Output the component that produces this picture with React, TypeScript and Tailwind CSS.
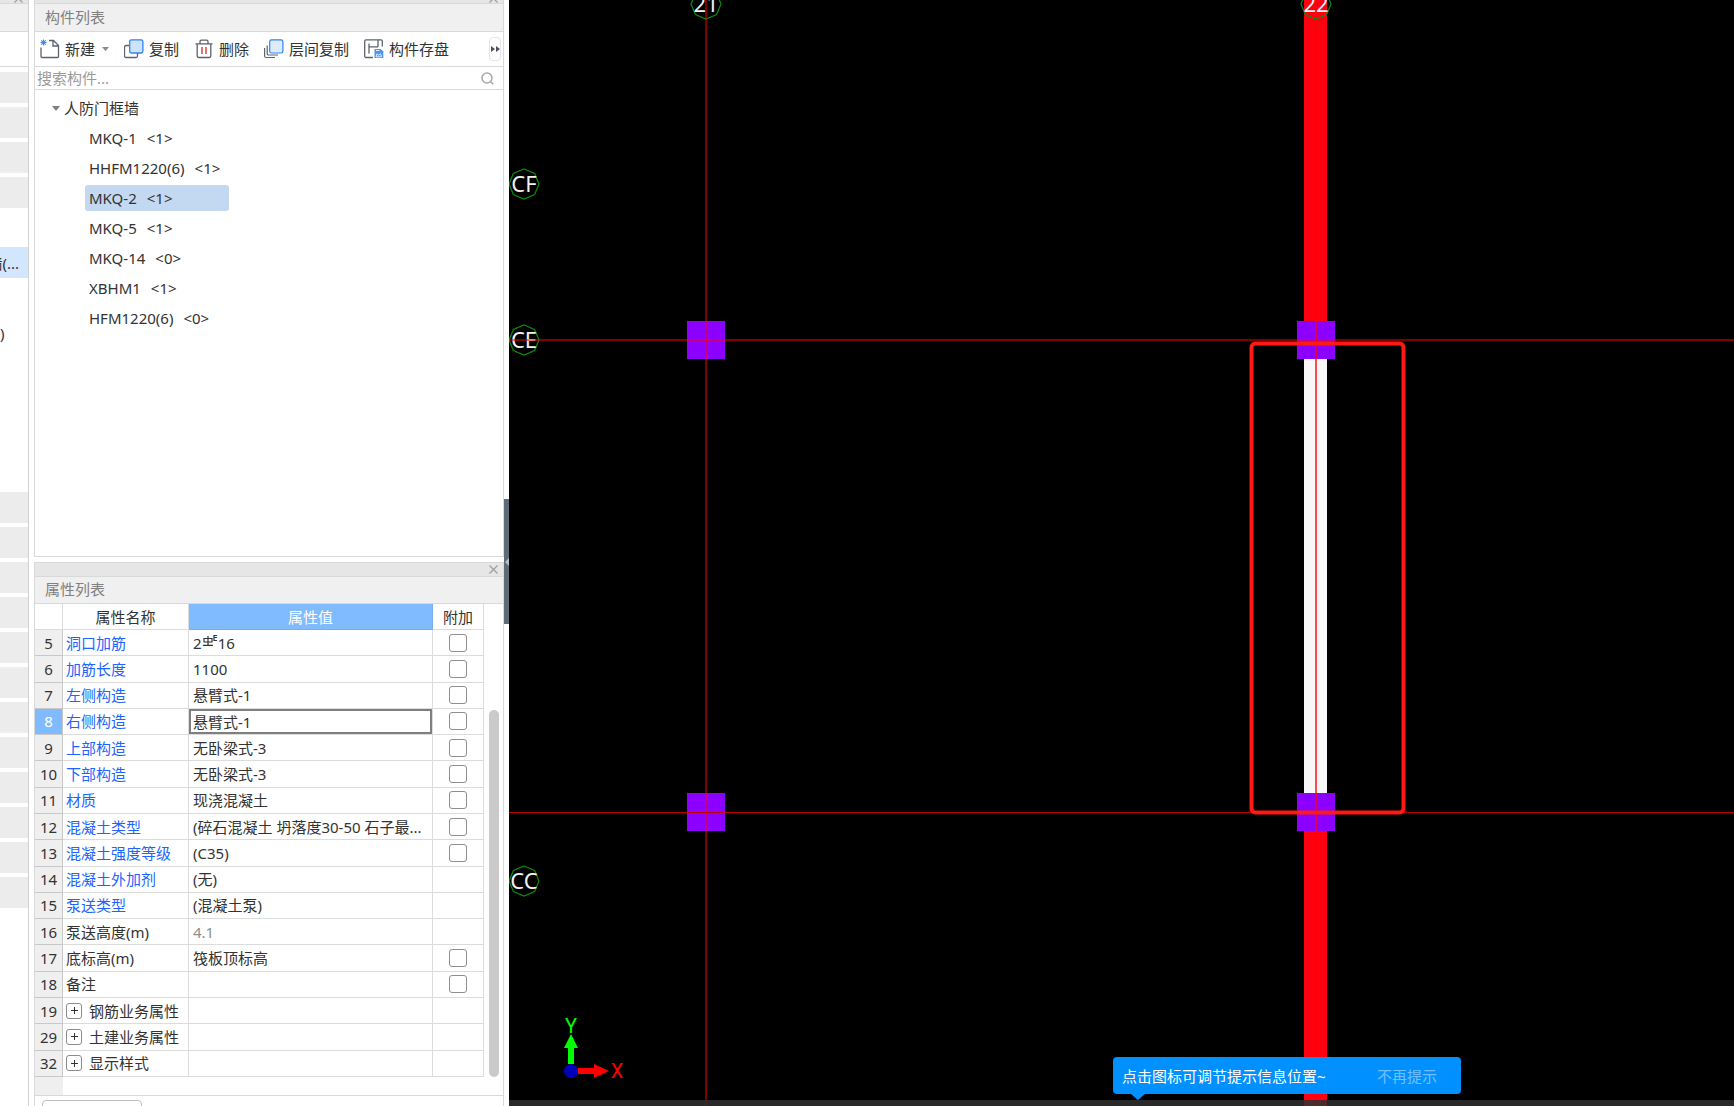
import { useState } from "react";

interface Component {
  name: string;
  count: number;
}

interface Property {
  id: number;
  name: string;
  value?: string;
  common?: boolean;
  extra?: boolean;
  group?: boolean;
  muted?: boolean;
}

const components: Component[] = [
  { name: "MKQ-1", count: 1 },
  { name: "HHFM1220(6)", count: 1 },
  { name: "MKQ-2", count: 1 },
  { name: "MKQ-5", count: 1 },
  { name: "MKQ-14", count: 0 },
  { name: "XBHM1", count: 1 },
  { name: "HFM1220(6)", count: 0 },
];

const properties: Property[] = [
  { id: 5, name: "洞口加筋", value: "rebar", common: true, extra: true },
  { id: 6, name: "加筋长度", value: "1100", common: true, extra: true },
  { id: 7, name: "左侧构造", value: "悬臂式-1", common: true, extra: true },
  { id: 8, name: "右侧构造", value: "悬臂式-1", common: true, extra: true },
  { id: 9, name: "上部构造", value: "无卧梁式-3", common: true, extra: true },
  { id: 10, name: "下部构造", value: "无卧梁式-3", common: true, extra: true },
  { id: 11, name: "材质", value: "现浇混凝土", common: true, extra: true },
  { id: 12, name: "混凝土类型", value: "(碎石混凝土 坍落度30-50 石子最...", common: true, extra: true },
  { id: 13, name: "混凝土强度等级", value: "(C35)", common: true, extra: true },
  { id: 14, name: "混凝土外加剂", value: "(无)", common: true },
  { id: 15, name: "泵送类型", value: "(混凝土泵)", common: true },
  { id: 16, name: "泵送高度(m)", value: "4.1", muted: true },
  { id: 17, name: "底标高(m)", value: "筏板顶标高", extra: true },
  { id: 18, name: "备注", extra: true },
  { id: 19, name: "钢筋业务属性", group: true },
  { id: 29, name: "土建业务属性", group: true },
  { id: 32, name: "显示样式", group: true },
];

// module list: g = collapsed group, s = selected, anything else is a plain row
const modules = "gggg.s.t....gggggggggggg".split("");

function CloseIcon() {
  return (
    <svg className="h-[9px] w-[9px] shrink-0" viewBox="0 0 9 9" fill="none" stroke="#a0a0a0" strokeWidth="1.3">
      <path d="M.5.5l8 8M8.5.5l-8 8" />
    </svg>
  );
}

function NewIcon() {
  return (
    <svg className="h-5 w-5" viewBox="0 0 20 20" fill="none">
      <path d="M1 8.500V17.500a1 1 0 0 0 1 1H17.500a1 1 0 0 0 1-1V6.500L13.500 1.500H9M13 1.500V7h5.500" stroke="#5b6270" strokeWidth="1.3" />
      <path d="M3.500.500v6M.500 3.500h6M1.300 1.300l4.400 4.400M5.700 1.300L1.300 5.700" stroke="#3c8cf0" strokeWidth="1.1" />
    </svg>
  );
}

function CopyIcon() {
  return (
    <svg className="h-5 w-5" viewBox="0 0 20 20" fill="none" strokeWidth="1.3">
      <path d="M5.500 6.500H2a1.500 1.500 0 0 0-1.500 1.500v9A1.500 1.500 0 0 0 2 18.500h10a1.500 1.500 0 0 0 1.500-1.500V14" stroke="#5b6270" />
      <rect x="5.700" y=".800" width="13.200" height="13.200" rx="1.800" fill="#cfe2fa" stroke="#2f86ee" />
    </svg>
  );
}

function DeleteIcon() {
  return (
    <svg className="h-5 w-5" viewBox="0 0 20 20" fill="none" strokeWidth="1.300">
      <path d="M1.500 4.800h17M6 4.800V2.500a1.300 1.300 0 0 1 1.300-1.300h5.400a1.300 1.300 0 0 1 1.300 1.300v2.300M3.200 4.800v12.200a1.500 1.500 0 0 0 1.500 1.500h10.600a1.500 1.500 0 0 0 1.500-1.500V4.800" stroke="#5b6270" />
      <path d="M8 8v7M12 8v7" stroke="#e0453c" strokeWidth="1.500" />
    </svg>
  );
}

function FloorCopyIcon() {
  return (
    <svg className="h-5 w-5" viewBox="0 0 20 20" fill="none" strokeWidth="1.200">
      <path d="M.600 9v8a1.500 1.500 0 0 0 1.500 1.500H11M3.200 6.500v8a1.500 1.500 0 0 0 1.500 1.500H14" stroke="#5b6270" />
      <rect x="5.700" y=".800" width="13.200" height="13.200" rx="1.800" fill="#deebfc" stroke="#2f86ee" />
    </svg>
  );
}

function SaveIcon() {
  return (
    <svg className="h-5 w-5" viewBox="0 0 20 20" fill="none" strokeWidth="1.300">
      <path d="M9 18.500H2a1.300 1.300 0 0 1-1.300-1.300V2A1.300 1.300 0 0 1 2 .800h15A1.300 1.300 0 0 1 18.300 2v5.500M5 4.500v10M5 7.800h9M14 1v6.800" stroke="#5b6270" />
      <path d="M10.500 10h6.300l2.500 2.500v6.500h-8.800z" fill="#4a94f2" />
      <path d="M12 17.800l1-3 1.800 1.500 1.800-1.500 1 3zM12 11.500h3.500" stroke="#e4effd" strokeWidth="1" />
    </svg>
  );
}

function DockBar({ children }: { children?: React.ReactNode }) {
  return (
    <div className="flex h-[3px] shrink-0 items-end justify-end overflow-hidden bg-[#e6e6e6] px-[5px]">
      {children}
    </div>
  );
}

function ModuleStrip() {
  return (
    <aside className="flex w-[29px] shrink-0 flex-col overflow-hidden border-r border-[#d2d2d2]">
      <DockBar>
        <CloseIcon />
      </DockBar>
      <div className="h-7 shrink-0 border-t border-[#d9d9d9] bg-[#f0f0f0]" />
      <div className="h-9 shrink-0 border-y border-[#d9d9d9]" />
      <ul className="mt-[5px] flex flex-col gap-1">
        {modules.map((kind, i) => (
          <li
            key={i}
            className={
              kind === "g"
                ? "h-[31px] bg-[#ececec]"
                : kind === "s"
                  ? "flex h-[31px] items-center justify-end bg-[#d2e6ff] pr-[9px] whitespace-nowrap"
                  : "flex h-[31px] items-center"
            }
          >
            {kind === "s" && "墙(..."}
            {kind === "t" && ")"}
          </li>
        ))}
      </ul>
    </aside>
  );
}

function ComponentPanel() {
  const [selected, setSelected] = useState("MKQ-2");

  return (
    <section className="flex min-h-0 flex-1 flex-col overflow-hidden border-x border-b border-[#d9d9d9]">
      <DockBar>
        <CloseIcon />
      </DockBar>
      <h2 className="h-7 shrink-0 border-t border-[#d9d9d9] bg-[#f0f0f0] px-2.5 leading-[26px] text-[#808080]">构件列表</h2>
      <div className="flex h-9 shrink-0 items-center gap-[15px] border-y border-[#d9d9d9] pr-[2px] pl-[5px] whitespace-nowrap">
        <button className="flex items-center gap-[5px]">
          <NewIcon />
          新建
          <svg className="ml-[2px] h-1 w-[7px]" viewBox="0 0 7 4" fill="#8a8a8a">
            <path d="M0 0h7L3.500 4z" />
          </svg>
        </button>
        <button className="flex items-center gap-[5px]">
          <CopyIcon />
          复制
        </button>
        <button className="flex items-center gap-[5px]">
          <DeleteIcon />
          删除
        </button>
        <button className="flex items-center gap-[5px]">
          <FloorCopyIcon />
          层间复制
        </button>
        <button className="flex items-center gap-[5px]">
          <SaveIcon />
          构件存盘
        </button>
        <button aria-label="更多" className="ml-auto flex h-6 w-3 items-center justify-center rounded-sm border border-[#e4e4e4]">
          <svg className="h-[6px] w-[9px] shrink-0" viewBox="0 0 9 6" fill="#4a5060">
            <path d="M0 0l4 3-4 3zM5 0l4 3-4 3z" />
          </svg>
        </button>
      </div>
      <div className="flex h-[23px] shrink-0 items-center border-b border-[#d9d9d9] pr-[9px] pl-[2px]">
        <input
          aria-label="搜索构件"
          placeholder="搜索构件..."
          className="min-w-0 flex-1 leading-5 outline-none placeholder:text-[#9a9a9a]"
        />
        <svg className="h-[13px] w-[13px]" viewBox="0 0 13 13" fill="none" stroke="#a8a8a8" strokeWidth="1.500">
          <circle cx="6" cy="6" r="5" />
          <path d="M9.500 9.500l2.800 2.800" />
        </svg>
      </div>
      <div className="pt-[3px]">
        <div className="flex h-[30px] items-center gap-1 pl-[17px]">
          <svg className="h-[5px] w-2" viewBox="0 0 8 5" fill="#808080">
            <path d="M0 0h8L4 5z" />
          </svg>
          人防门框墙
        </div>
        <ul>
          {components.map((item) => (
            <li key={item.name} className="flex h-[30px] items-center pl-[50px]">
              <button
                onClick={() => setSelected(item.name)}
                className={
                  item.name === selected
                    ? "flex h-[26px] w-36 items-center gap-2.5 rounded-[3px] bg-[#c3d9f1] pl-1"
                    : "flex h-[26px] w-36 items-center gap-2.5 pl-1"
                }
              >
                <span>{item.name}</span>
                <span>&lt;{item.count}&gt;</span>
              </button>
            </li>
          ))}
        </ul>
      </div>
    </section>
  );
}

function RebarValue() {
  return (
    <span className="flex items-start">
      2
      <svg className="mt-1 ml-px h-2.5 w-2.5" viewBox="0 0 10 10" fill="none" stroke="#333" strokeWidth="1.200">
        <path d="M5 0v9M1 2.500h8v3.500H1zM0 9.300h10" />
      </svg>
      <span className="text-[9px] leading-3 font-semibold">E</span>
      16
    </span>
  );
}

function PropertyRow({ item, active }: { item: Property; active: boolean }) {
  return (
    <tr className="h-[26px]">
      <th
        scope="row"
        className={
          active
            ? "border-r border-b border-[#c8c8c8] bg-[#80baff] p-0 text-center font-normal text-white"
            : "border-r border-b border-[#c8c8c8] bg-[#efefef] p-0 text-center font-normal"
        }
      >
        {item.id}
      </th>
      <td className={item.common ? "border-r border-b border-[#dcdcdc] p-0 pl-[3px] text-[#1e64ff]" : "border-r border-b border-[#dcdcdc] p-0 pl-[3px]"}>
        {item.group ? (
          <span className="flex items-center gap-[7px]">
            <button aria-label={`展开${item.name}`} className="flex h-4 w-4 items-center justify-center rounded-[3px] border border-[#8c8c8c]">
              <svg className="h-[7px] w-[7px]" viewBox="0 0 7 7" stroke="#333">
                <path d="M3.500 0v7M0 3.500h7" />
              </svg>
            </button>
            {item.name}
          </span>
        ) : (
          item.name
        )}
      </td>
      <td className={active ? "border-r border-b border-[#dcdcdc] p-0" : "border-r border-b border-[#dcdcdc] p-0 pl-1"}>
        {active ? (
          <input
            aria-label={item.name}
            defaultValue={item.value}
            className="block h-[25px] w-full border-2 border-[#7f7f7f] pl-[2px] leading-5 outline-none"
          />
        ) : item.value === "rebar" ? (
          <RebarValue />
        ) : (
          <span className={item.muted ? "text-[#8f8f8f]" : ""}>{item.value}</span>
        )}
      </td>
      <td className="border-r border-b border-[#dcdcdc] p-0">
        {item.extra && (
          <input
            type="checkbox"
            aria-label={`${item.name}附加`}
            className="mx-auto block h-[18px] w-[18px] appearance-none rounded-[3px] border border-[#8f8f8f] bg-white checked:bg-[#80baff]"
          />
        )}
      </td>
    </tr>
  );
}

function PropertyPanel() {
  return (
    <section className="shrink-0 border border-b-0 border-[#d9d9d9]">
      <div className="flex h-[13px] items-center justify-end bg-[#e6e6e6] px-[5px]">
        <button aria-label="关闭">
          <CloseIcon />
        </button>
      </div>
      <h2 className="h-7 border-y border-[#d9d9d9] bg-[#f0f0f0] px-2.5 leading-6 text-[#808080]">属性列表</h2>
      <div className="flex h-[473px]">
        <table className="h-full w-[449px] table-fixed border-separate border-spacing-0 leading-[22px]">
          <colgroup>
            <col className="w-7" />
            <col className="w-[126px]" />
            <col className="w-[244px]" />
            <col className="w-[51px]" />
          </colgroup>
          <thead>
            <tr className="h-[26px]">
              <td className="border-r border-b border-[#dcdcdc] p-0" />
              <th className="border-r border-b border-[#dcdcdc] p-0 text-center font-normal">属性名称</th>
              <th className="border-r border-b border-[#78aeee] bg-[#80baff] p-0 text-center font-normal text-white">属性值</th>
              <th className="border-r border-b border-[#dcdcdc] p-0 text-center font-normal">附加</th>
            </tr>
          </thead>
          <tbody>
            {properties.map((item) => (
              <PropertyRow key={item.id} item={item} active={item.id === 8} />
            ))}
          </tbody>
        </table>
        <div className="flex flex-1 items-end justify-center">
          <div className="h-[367px] w-2.5 rounded-full bg-[#cacaca]" />
        </div>
      </div>
      <div className="h-[19px] border-b border-[#d9d9d9]">
        <div className="h-full w-7 bg-[#efefef]" />
      </div>
      <div className="h-2.5 overflow-hidden px-[7px] pt-1">
        <button aria-label="参数图" className="block h-7 w-[100px] rounded-[4px] border border-[#bdbdbd]" />
      </div>
    </section>
  );
}

function AxisLabel({ x, y, text }: { x: number; y: number; text: string }) {
  return (
    <g transform={`translate(${x} ${y})`}>
      <path d="M0-15L10.600-10.600 15 0 10.600 10.600 0 15-10.600 10.600-15 0-10.600-10.600z" fill="none" stroke="#0a8c0a" strokeWidth="1.200" />
      <text y="8" textAnchor="middle" fill="#f2f2f2" fontSize="22">
        {text}
      </text>
    </g>
  );
}

function Canvas() {
  return (
    <main className="relative min-w-0 flex-1 overflow-hidden bg-black">
      <svg className="block h-full w-full">
        {/* walls */}
        <rect x="795" y="0" width="23" height="100%" fill="#ff0010" />
        <rect x="795" y="340" width="23" height="473" fill="#f8f8f8" />
        {/* columns */}
        <g fill="#8b00ff">
          <rect x="178" y="321" width="38" height="38" />
          <rect x="788" y="321" width="38" height="38" />
          <rect x="178" y="793" width="38" height="38" />
          <rect x="788" y="793" width="38" height="38" />
        </g>
        <AxisLabel x={197} y={4} text="21" />
        <AxisLabel x={807} y={4} text="22" />
        <AxisLabel x={15} y={184} text="CF" />
        <AxisLabel x={15} y={340} text="CE" />
        <AxisLabel x={15} y={881} text="CC" />
        <AxisLabel x={807} y={1118} text="22" />
        {/* axis grid */}
        <g stroke="#ff0000">
          <line x1="197" y1="0" x2="197" y2="100%" />
          <line x1="807" y1="20" x2="807" y2="100%" strokeWidth="1.400" />
          <line x1="0" y1="340" x2="100%" y2="340" />
          <line x1="0" y1="812.5" x2="100%" y2="812.5" stroke="#c00000" />
        </g>
        <rect x="742.500" y="343.500" width="152" height="469" rx="4" fill="none" stroke="#ff1a14" strokeWidth="4" />
        {/* coordinate system */}
        <path d="M59 1064V1048H55L62 1034 69 1048H65V1064z" fill="#00ff00" />
        <path d="M69 1068H85V1064L100 1071 85 1078V1074H69z" fill="#ff0000" />
        <circle cx="62" cy="1071" r="7" fill="#0000b8" />
        <g className="font-['Roboto',sans-serif]" fontSize="20" textAnchor="middle">
          <text x="62" y="1033" fill="#00ff00">
            Y
          </text>
          <text x="108" y="1078" fill="#ff0000">
            X
          </text>
        </g>
      </svg>
      <div className="absolute bottom-0 h-1.5 w-full bg-[#303030]/85" />
      <div className="absolute bottom-3 left-[604px] flex h-[37px] w-[348px] items-center justify-between rounded-[4px] bg-[#0090ff] pr-6 pl-[9px] whitespace-nowrap text-white">
        点击图标可调节提示信息位置~
        <button className="text-[#70c0ff]">不再提示</button>
        <svg className="absolute top-full left-[18px] h-1.5 w-[14px]" viewBox="0 0 14 6" fill="#0090ff">
          <path d="M0 0h14L7 6z" />
        </svg>
      </div>
    </main>
  );
}

export default function App() {
  return (
    <div className="flex h-screen overflow-hidden bg-white font-['Noto_Sans','Noto_Sans_CJK_SC',sans-serif] text-[15px] leading-5 text-[#333]">
      <ModuleStrip />
      <div className="ml-[5px] flex w-[470px] shrink-0 flex-col gap-[5px]">
        <ComponentPanel />
        <PropertyPanel />
      </div>
      <div className="flex w-[5px] shrink-0 flex-col pt-[499px]">
        <button aria-label="收起" className="flex h-[125px] items-center justify-end bg-[#5f6b77]">
          <svg className="h-2 w-1" viewBox="0 0 4 8" fill="#b8bec4">
            <path d="M4 0v8L0 4z" />
          </svg>
        </button>
      </div>
      <Canvas />
    </div>
  );
}
